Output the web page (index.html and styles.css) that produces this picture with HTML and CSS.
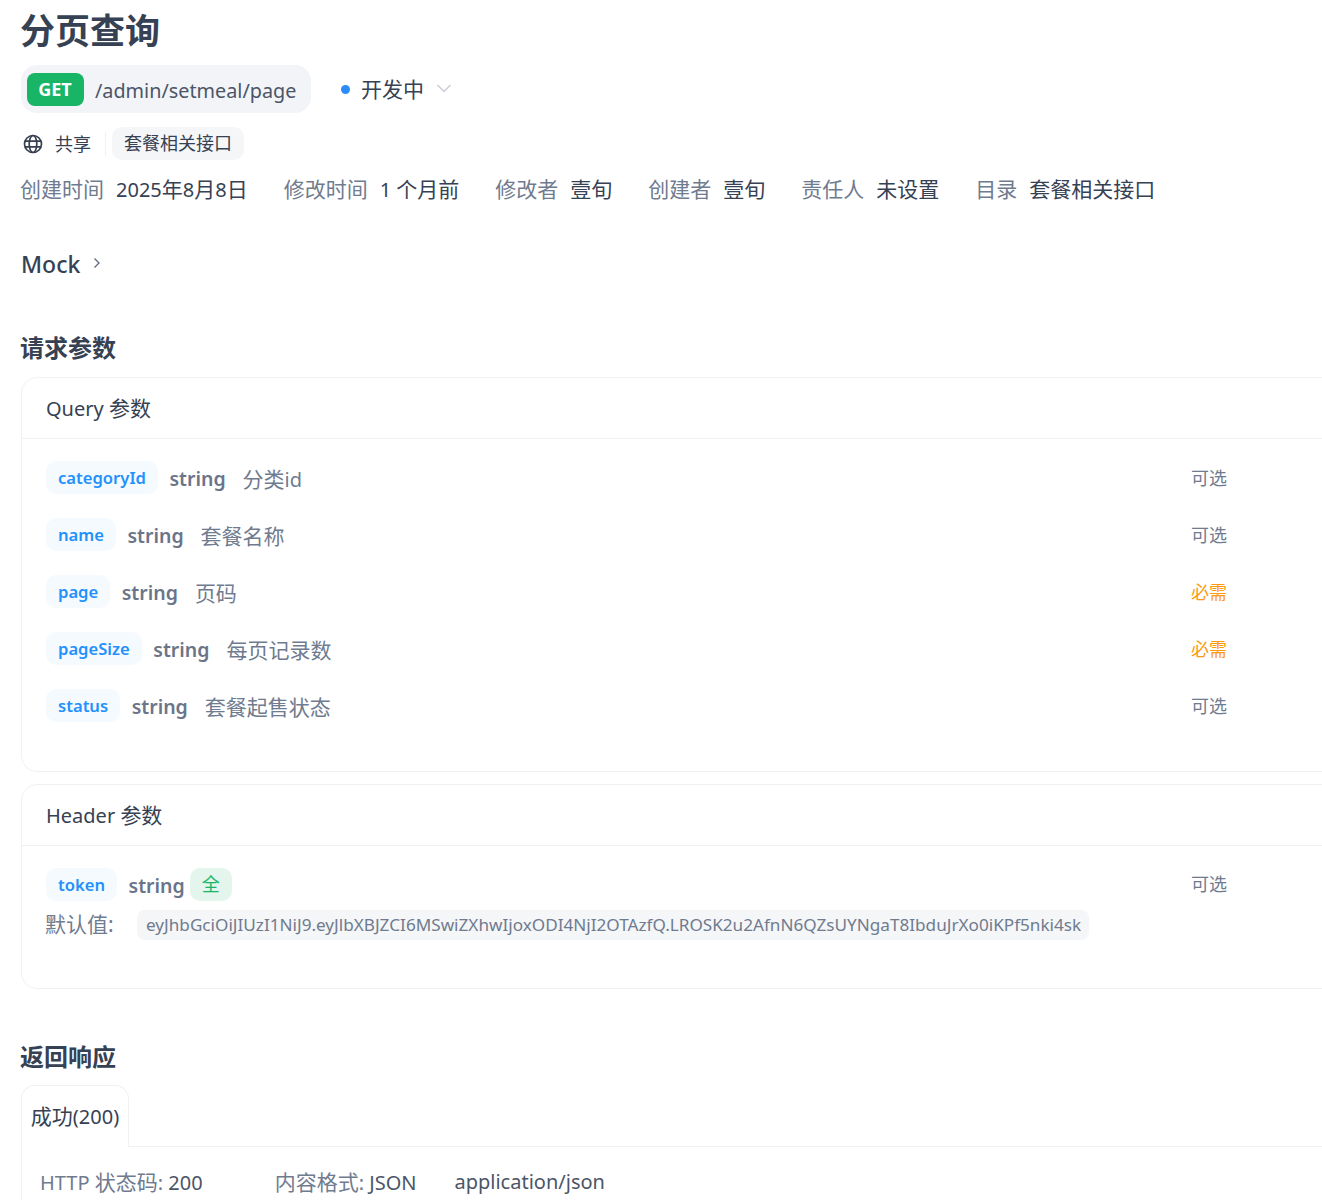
FILE: index.html
```html
<!DOCTYPE html>
<html lang="zh-CN">
<head>
<meta charset="utf-8">
<title>分页查询</title>
<link rel="stylesheet" href="styles.css">
</head>
<body>
<main class="page">
  <h1 class="title">分页查询</h1>
  <div class="endpoint-row">
    <div class="endpoint">
      <span class="method">GET</span>
      <span class="path">/admin/setmeal/page</span>
    </div>
    <div class="status">
      <span class="dot"></span>
      <span>开发中</span>
      <svg class="caret" width="16" height="16" viewBox="0 0 16 16"><path d="M1.5 5l6.5 6.5L14.500 5" fill="none" stroke="#c9ced6" stroke-width="1.500"/></svg>
    </div>
  </div>
  <div class="share-row">
    <svg class="globe" width="20" height="20" viewBox="0 0 20 20" fill="none" stroke="#363f50" stroke-width="1.700">
      <circle cx="10" cy="10" r="8.500"/>
      <ellipse cx="10" cy="10" rx="3.800" ry="8.500"/>
      <path d="M2 7.200h16M2 12.800h16"/>
    </svg>
    <span class="share-label">共享</span>
    <span class="divider"></span>
    <span class="folder-tag">套餐相关接口</span>
  </div>
  <dl class="meta">
    <div class="meta-item"><dt>创建时间</dt><dd><span class="lat">2025</span>年<span class="lat">8</span>月<span class="lat">8</span>日</dd></div>
    <div class="meta-item"><dt>修改时间</dt><dd><span class="lat">1 </span>个月前</dd></div>
    <div class="meta-item"><dt>修改者</dt><dd>壹旬</dd></div>
    <div class="meta-item"><dt>创建者</dt><dd>壹旬</dd></div>
    <div class="meta-item"><dt>责任人</dt><dd>未设置</dd></div>
    <div class="meta-item"><dt>目录</dt><dd>套餐相关接口</dd></div>
  </dl>
  <div class="mock">
    <span>Mock</span>
    <svg width="12" height="12" viewBox="0 0 12 12"><path d="M3.500 1.500L8 6l-4.500 4.500" fill="none" stroke="#5f6b7d" stroke-width="1.300"/></svg>
  </div>

  <h2 class="section-title params-title">请求参数</h2>
  <section class="card query-card">
    <h3 class="card-head"><span class="lat">Query </span>参数</h3>
    <div class="card-body">
      <div class="param"><span class="name">categoryId</span><span class="type">string</span><span class="desc">分类<span class="lat">id</span></span><span class="req">可选</span></div>
      <div class="param"><span class="name">name</span><span class="type">string</span><span class="desc">套餐名称</span><span class="req">可选</span></div>
      <div class="param"><span class="name">page</span><span class="type">string</span><span class="desc">页码</span><span class="req must">必需</span></div>
      <div class="param"><span class="name">pageSize</span><span class="type">string</span><span class="desc">每页记录数</span><span class="req must">必需</span></div>
      <div class="param"><span class="name">status</span><span class="type">string</span><span class="desc">套餐起售状态</span><span class="req">可选</span></div>
    </div>
  </section>
  <section class="card header-card">
    <h3 class="card-head"><span class="lat">Header </span>参数</h3>
    <div class="card-body">
      <div class="param token"><span class="name">token</span><span class="type">string</span><span class="scope">全</span><span class="req">可选</span></div>
      <div class="default-row"><span class="default-label">默认值:</span><code class="default-value">eyJhbGciOiJIUzI1NiJ9.eyJlbXBJZCI6MSwiZXhwIjoxODI4NjI2OTAzfQ.LROSK2u2AfnN6QZsUYNgaT8IbduJrXo0iKPf5nki4sk</code></div>
    </div>
  </section>

  <h2 class="section-title response-title">返回响应</h2>
  <div class="tabs"><span class="tab">成功<span class="lat">(200)</span></span></div>
  <div class="response-panel">
    <span class="resp-item"><span class="lat">HTTP </span>状态码<span class="lat">: </span><b class="lat">200</b></span>
    <span class="resp-item">内容格式<span class="lat">: </span><b class="lat">JSON</b></span>
    <span class="resp-type lat">application/json</span>
  </div>
</main>
</body>
</html>
```
FILE: styles.css
```css
html, body {
  margin: 0;
  padding: 0;
  height: 1200px;
  overflow: hidden;
  background: #fff;
}
body {
  font-family: "Noto Sans", "Noto Sans CJK SC", sans-serif;
  color: #364153;
  font-size: 21px;
}
.lat {
  font-size: 20px;
}
.page {
  width: 1400px;
  padding-left: 21px;
}
.title {
  margin: 0 0 0 -1px;
  height: 65px;
  font-size: 35px;
  line-height: 62px;
  font-weight: 700;
  color: #364153;
}
.endpoint-row {
  display: flex;
  align-items: center;
  height: 48px;
}
.endpoint {
  display: flex;
  align-items: center;
  height: 48px;
  width: 290px;
  box-sizing: border-box;
  padding-left: 6px;
  background: #f2f4f8;
  border-radius: 16px;
}
.method {
  width: 57px;
  height: 33px;
  line-height: 33px;
  text-align: center;
  text-indent: -1px;
  background: #18b566;
  color: #fff;
  border-radius: 8px;
  font-size: 18px;
  font-weight: 700;
}
.path {
  margin-left: 11px;
  padding-top: 2px;
  font-size: 19.800px;
  color: #4b5567;
}
.status {
  display: flex;
  align-items: center;
  margin-left: 30px;
  padding-bottom: 2px;
  font-size: 21px;
  color: #364153;
}
.dot {
  width: 9px;
  height: 9px;
  border-radius: 50%;
  background: #2b8cf7;
  margin: 3px 11px 0 0;
}
.caret {
  margin-left: 12px;
}
.share-row {
  display: flex;
  align-items: center;
  height: 33px;
  margin-top: 14px;
}
.globe {
  margin-left: 2px;
}
.share-label {
  margin-left: 12px;
  padding-bottom: 2px;
  font-size: 18px;
}
.divider {
  width: 1px;
  height: 24px;
  background: #f0f1f4;
  margin: 0 6px 0 14px;
}
.folder-tag {
  height: 33px;
  line-height: 33px;
  padding: 0 12px;
  background: #f5f6f8;
  border-radius: 10px;
  font-size: 18px;
}
.meta {
  display: flex;
  gap: 36px;
  margin: 12px 0 0 -1px;
  height: 36px;
  line-height: 34px;
}
.meta-item {
  display: flex;
  gap: 12px;
}
.meta dt {
  color: #6f7b8f;
}
.meta dd {
  margin: 0;
}
.mock {
  display: flex;
  align-items: center;
  gap: 11px;
  margin-top: 40px;
  font-size: 23px;
  font-weight: 500;
  height: 32px;
}
.mock svg {
  margin-top: -3px;
}
.section-title {
  margin: 0;
  font-size: 24px;
  line-height: 32px;
  font-weight: 700;
}
.params-title {
  margin: 52px 0 0 -1px;
}
.card {
  border: 1px solid #f0f1f4;
  border-radius: 16px;
  box-sizing: border-box;
}
.query-card {
  margin-top: 13px;
  height: 395px;
}
.header-card {
  margin-top: 12px;
  height: 205px;
}
.card-head {
  margin: 0;
  height: 60px;
  line-height: 60px;
  padding-left: 24px;
  font-size: 21px;
  font-weight: 400;
  border-bottom: 1px solid #f0f1f4;
}
.card-body {
  padding: 22px 193px 0 24px;
}
.param {
  display: flex;
  align-items: center;
  height: 33px;
  margin-bottom: 24px;
}
.param.token {
  margin-bottom: 9px;
}
.name {
  height: 33px;
  line-height: 34px;
  padding: 0 12px;
  border-radius: 10px;
  background: #f5faff;
  color: #2291fb;
  font-size: 16.600px;
  font-weight: 600;
}
.type {
  margin-left: 11.500px;
  padding-top: 2px;
  font-size: 19.500px;
  font-weight: 600;
  color: #6b7589;
}
.desc {
  margin-left: 17px;
  font-size: 21px;
  color: #6f7b8f;
}
.scope {
  width: 42px;
  height: 33px;
  line-height: 32px;
  text-align: center;
  margin-left: 5px;
  border-radius: 10px;
  background: #e3f5ec;
  color: #18b566;
  font-size: 18px;
}
.req {
  margin-left: auto;
  padding-bottom: 2px;
  font-size: 18px;
  color: #6f7b8f;
}
.token .req {
  padding-bottom: 4px;
}
.req.must {
  color: #fd9a0f;
}
.default-row {
  display: flex;
  align-items: center;
  height: 30px;
}
.default-label {
  width: 91px;
  padding-bottom: 5px;
  margin-left: -1px;
  color: #6f7b8f;
  font-size: 21px;
}
.default-value {
  height: 30px;
  line-height: 30px;
  margin-left: 1px;
  padding: 0 8px 0 9px;
  background: #f5f6f8;
  border-radius: 8px;
  font-family: "Noto Sans", sans-serif;
  font-size: 17.150px;
  color: #6f7b8f;
}
.response-title {
  margin: 52px 0 0 -1px;
}
.tabs {
  margin-top: 12px;
  height: 62px;
  box-sizing: border-box;
  border-bottom: 1px solid #f0f1f4;
  display: flex;
}
.tab {
  width: 108px;
  height: 62px;
  box-sizing: border-box;
  line-height: 60px;
  text-align: center;
  font-size: 21px;
  border: 1px solid #f0f1f4;
  border-bottom: 1px solid #fff;
  border-radius: 14px 14px 0 0;
  background: #fff;
}
.response-panel {
  display: flex;
  align-items: center;
  height: 68px;
  padding-left: 18px;
  border-left: 1px solid #f0f1f4;
  font-size: 21px;
  color: #6f7b8f;
}
.resp-item b {
  font-weight: 400;
  color: #4b5567;
}
.resp-item {
  margin-right: 72px;
}
.resp-item + .resp-item {
  margin-right: 38px;
}
.resp-type {
  color: #4b5567;
}
```
